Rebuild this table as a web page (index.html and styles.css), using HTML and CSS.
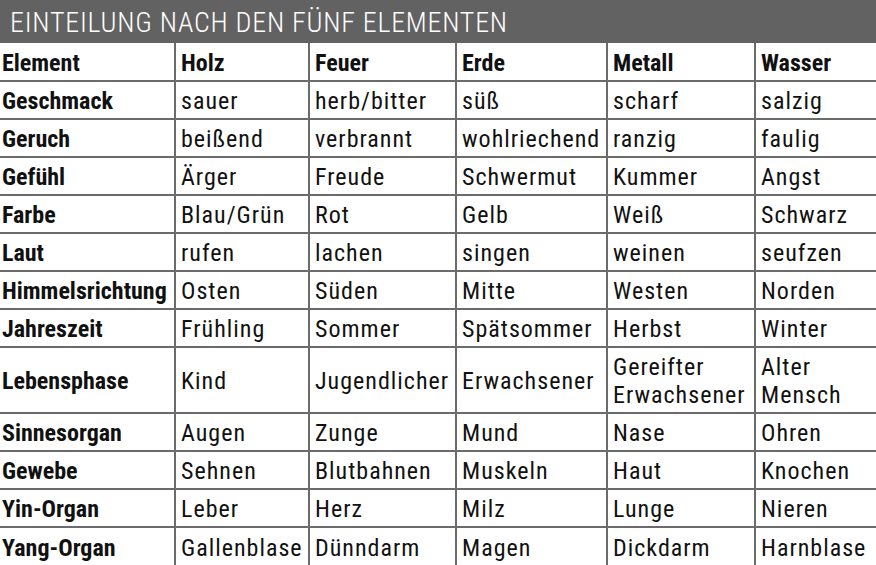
FILE: index.html
```html
<!DOCTYPE html>
<html lang="de">
<head>
<meta charset="utf-8">
<link rel="stylesheet" href="styles.css">
</head>
<body>
<div class="title">EINTEILUNG NACH DEN FÜNF ELEMENTEN</div>
<table class="grid">
<colgroup>
<col class="c0"><col class="c1"><col class="c2"><col class="c3"><col class="c4"><col class="c5">
</colgroup>
<tr class="head"><th>Element</th><th>Holz</th><th>Feuer</th><th>Erde</th><th>Metall</th><th>Wasser</th></tr>
<tr><th>Geschmack</th><td>sauer</td><td>herb/bitter</td><td>süß</td><td>scharf</td><td>salzig</td></tr>
<tr><th>Geruch</th><td>beißend</td><td>verbrannt</td><td>wohlriechend</td><td>ranzig</td><td>faulig</td></tr>
<tr><th>Gefühl</th><td>Ärger</td><td>Freude</td><td>Schwermut</td><td>Kummer</td><td>Angst</td></tr>
<tr><th>Farbe</th><td>Blau/Grün</td><td>Rot</td><td>Gelb</td><td>Weiß</td><td>Schwarz</td></tr>
<tr><th>Laut</th><td>rufen</td><td>lachen</td><td>singen</td><td>weinen</td><td>seufzen</td></tr>
<tr><th>Himmelsrichtung</th><td>Osten</td><td>Süden</td><td>Mitte</td><td>Westen</td><td>Norden</td></tr>
<tr><th>Jahreszeit</th><td>Frühling</td><td>Sommer</td><td>Spätsommer</td><td>Herbst</td><td>Winter</td></tr>
<tr class="tall"><th>Lebensphase</th><td>Kind</td><td>Jugendlicher</td><td>Erwachsener</td><td>Gereifter<br>Erwachsener</td><td>Alter<br>Mensch</td></tr>
<tr><th>Sinnesorgan</th><td>Augen</td><td>Zunge</td><td>Mund</td><td>Nase</td><td>Ohren</td></tr>
<tr><th>Gewebe</th><td>Sehnen</td><td>Blutbahnen</td><td>Muskeln</td><td>Haut</td><td>Knochen</td></tr>
<tr><th>Yin-Organ</th><td>Leber</td><td>Herz</td><td>Milz</td><td>Lunge</td><td>Nieren</td></tr>
<tr class="last"><th>Yang-Organ</th><td>Gallenblase</td><td>Dünndarm</td><td>Magen</td><td>Dickdarm</td><td>Harnblase</td></tr>
</table>
</body>
</html>
```
FILE: styles.css
```css
html, body {
  margin: 0;
  padding: 0;
  background: #ffffff;
}
body {
  width: 876px;
  height: 565px;
  overflow: hidden;
  font-family: "Roboto Condensed", "DejaVu Sans Condensed", sans-serif;
  color: #111111;
}
.title {
  height: 43px;
  background: #626262;
  color: #ffffff;
  font-family: "Roboto Condensed", "DejaVu Sans Condensed", sans-serif;
  font-weight: 300;
  font-size: 28px;
  line-height: 45px;
  padding-left: 10px;
  letter-spacing: 0.75px;
  box-sizing: border-box;
}
.grid {
  border-collapse: collapse;
  table-layout: fixed;
  width: 878px;
}
.c0 { width: 175px; }
.c1 { width: 134px; }
.c2 { width: 147px; }
.c3 { width: 151px; }
.c4 { width: 148px; }
.c5 { width: 123px; }
.grid th, .grid td {
  border: 2px solid #6b6b6b;
  height: 38px;
  padding: 2px 0 0 5px;
  vertical-align: middle;
  text-align: left;
  white-space: nowrap;
  line-height: 28px;
  box-sizing: border-box;
}
.grid th {
  font-weight: bold;
  font-size: 24px;
  letter-spacing: 0;
}
.grid td {
  font-size: 24px;
  font-weight: normal;
  letter-spacing: 1px;
}
.grid tr th:first-child {
  border-left: none;
  padding-left: 2px;
}
.grid tr.head th {
  border-top: none;
}
.grid tr.last th, .grid tr.last td {
  border-bottom: none;
}
.grid tr.tall th, .grid tr.tall td {
  height: 66px;
}
```
